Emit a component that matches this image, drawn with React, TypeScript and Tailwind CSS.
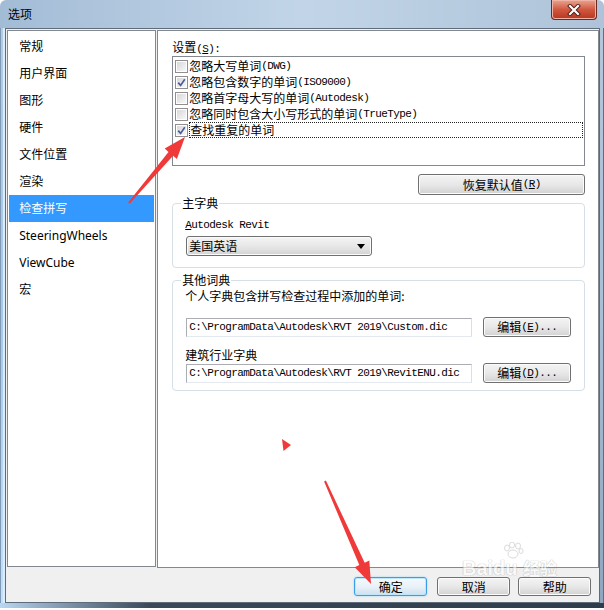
import React from "react";

const M = ({ children }: { children: React.ReactNode }) => (
  <span className="font-['Liberation_Mono',monospace] text-[11px] tracking-[-0.6px]">{children}</span>
);

function Check({ checked }: { checked: boolean }) {
  return (
    <span className="w-[13px] h-[13px] border border-[#8f8f8f] p-[1px] bg-white flex shrink-0">
      <span className="flex-1 bg-gradient-to-br from-[#d8d8d8] to-[#f8f8f8] flex items-center justify-center">
        {checked && (
          <svg width="9" height="9" viewBox="0 0 9 9">
            <path d="M1.2 4.6 L3.6 7.4 L7.8 1.2" stroke="#4b5f9e" strokeWidth="1.7" fill="none" />
          </svg>
        )}
      </span>
    </span>
  );
}

function WinButton({
  children,
  className = "",
  primary = false,
}: {
  children: React.ReactNode;
  className?: string;
  primary?: boolean;
}) {
  return (
    <div
      className={
        "flex items-center justify-center rounded-[3px] border text-[12px] text-black " +
        (primary
          ? "border-[#3c9ee0] bg-gradient-to-b from-[#f4f9fd] via-[#e9f2f8] to-[#cfe0ee] shadow-[inset_0_0_0_1px_#bfe6fb,0_0_2px_#8fd0f5] "
          : "border-[#707070] bg-gradient-to-b from-[#f4f4f4] via-[#e8e8e8] to-[#d2d2d2] shadow-[inset_0_0_0_1px_#fbfbfb] ") +
        className
      }
    >
      {children}
    </div>
  );
}

const navItems = ["常规", "用户界面", "图形", "硬件", "文件位置", "渲染", "检查拼写", "SteeringWheels", "ViewCube", "宏"];

export default function App() {
  const listItems: { zh: string; en: string; checked: boolean }[] = [
    { zh: "忽略大写单词", en: "(DWG)", checked: false },
    { zh: "忽略包含数字的单词", en: "(ISO9000)", checked: true },
    { zh: "忽略首字母大写的单词", en: "(Autodesk)", checked: false },
    { zh: "忽略同时包含大小写形式的单词", en: "(TrueType)", checked: false },
    { zh: "查找重复的单词", en: "", checked: true },
  ];

  return (
    <div className="relative w-[604px] h-[610px] bg-white overflow-hidden font-['Noto_Sans_CJK_SC',sans-serif] text-[12px] text-black">
      <div className="flex flex-col h-[608px] rounded-t-[6px] overflow-hidden">
        {/* Title bar */}
        <div className="h-[28px] flex items-start justify-between bg-gradient-to-r from-[#a3bcd6] via-[#c2d5e8] to-[#aec3d9]">
          <div className="h-[28px] flex items-center pl-[8px] text-[12px] leading-none">选项</div>
          <div className="mr-[7px] w-[46px] h-[20px] rounded-b-[4px] border border-t-0 border-[#6a2b22] bg-gradient-to-b from-[#e9a491] via-[#d0583f] to-[#b8341f] shadow-[inset_0_0_0_1px_#f0b4a6] flex items-center justify-center">
            <svg width="14" height="12" viewBox="0 0 14 12">
              <path d="M3 2 L11 10 M11 2 L3 10" stroke="#4a1c14" strokeWidth="4" strokeLinecap="square" />
              <path d="M3 2 L11 10 M11 2 L3 10" stroke="#ffffff" strokeWidth="2.2" strokeLinecap="square" />
            </svg>
          </div>
        </div>

        {/* Middle */}
        <div className="flex flex-1 min-h-0">
          <div className="w-[7px] bg-gradient-to-b from-[#b4cbe2] via-[#a6c8ea] to-[#c5e0f7] border-l border-[#7f9ab6] shadow-[inset_-2px_0_0_#d8ecfb]" />
          <div className="flex-1 flex flex-col border border-[#5e6b79] bg-[#f0f0f0]">
            <div className="flex pl-[1px] pt-[1px] gap-[1px]">
              {/* Left nav */}
              <div className="w-[149px] h-[537px] border border-[#828790] bg-white pt-[2px] px-[1px] font-['Noto_Sans','Noto_Sans_CJK_SC',sans-serif]">
                {navItems.map((n) => (
                  <div
                    key={n}
                    className={
                      "h-[27px] flex items-center pl-[10px] text-[12px] " +
                      (n === "检查拼写" ? "bg-[#3399ff] text-white" : "text-black")
                    }
                  >
                    {n}
                  </div>
                ))}
              </div>

              {/* Right panel */}
              <div className="flex-1 h-[538px] border border-[#828790] bg-white pl-[14px] pr-[13px] pt-[8px] flex flex-col">
                <div className="h-[15px] leading-[15px]">
                  设置<M>(<span className="underline">S</span>):</M>
                </div>
                <div className="mt-[2px] h-[110px] border border-[#828790] pt-[1px] pl-[2px] pr-[1px]">
                  {listItems.map((it, i) => (
                    <div key={i} className="h-[16px] flex items-center">
                      <Check checked={it.checked} />
                      <div
                        className={
                          "ml-[1px] h-[16px] flex items-center leading-none whitespace-nowrap " +
                          (i === 4 ? "flex-1 border border-dotted border-[#222]" : "")
                        }
                      >
                        {it.zh}
                        {it.en && <M>{it.en}</M>}
                      </div>
                    </div>
                  ))}
                </div>

                <WinButton className="self-end mt-[8px] w-[167px] h-[21px]">
                  恢复默认值<M>(<span className="underline">R</span>)</M>
                </WinButton>

                <fieldset className="border border-[#d5dfe5] rounded-[4px] px-0 pb-[11px]">
                  <legend className="ml-[8px] px-[1px] leading-[16px] text-[12px]">主字典</legend>
                  <div className="pl-[12px] pt-[5px]">
                    <div className="h-[14px] leading-[14px]">
                      <M>
                        <span className="underline">A</span>utodesk Revit
                      </M>
                    </div>
                    <div className="mt-[6px] ml-[1px] w-[186px] h-[20px] rounded-[3px] border border-[#707070] bg-gradient-to-b from-[#f4f4f4] via-[#e8e8e8] to-[#d3d3d3] shadow-[inset_0_0_0_1px_#fbfbfb] flex items-center justify-between pl-[2px] pr-[6px]">
                      <span>美国英语</span>
                      <svg width="8" height="5" viewBox="0 0 8 5">
                        <path d="M0 0 H8 L4 5 Z" fill="#000" />
                      </svg>
                    </div>
                  </div>
                </fieldset>

                <fieldset className="mt-[6px] border border-[#d5dfe5] rounded-[4px] px-0 pb-[7px]">
                  <legend className="ml-[8px] px-[1px] leading-[12px] text-[12px]">其他词典</legend>
                  <div className="pl-[12px] pr-[13px]">
                    <div className="mt-[3px] h-[14px] leading-[14px]">个人字典包含拼写检查过程中添加的单词:</div>
                    <div className="mt-[14px] flex items-center gap-[11px]">
                      <div className="ml-[1px] w-[286px] h-[19px] border border-[#abadb3] border-r-[#dbdfe6] border-b-[#e3e9ef] bg-white flex items-center pl-[2px] leading-none">
                        <M>C:\ProgramData\Autodesk\RVT 2019\Custom.dic</M>
                      </div>
                      <WinButton className="w-[88px] h-[20px]">
                        编辑<M>(<span className="underline">E</span>)...</M>
                      </WinButton>
                    </div>
                    <div className="mt-[11px] h-[14px] leading-[14px]">建筑行业字典</div>
                    <div className="mt-[1px] flex items-center gap-[11px]">
                      <div className="ml-[1px] w-[286px] h-[19px] border border-[#abadb3] border-r-[#dbdfe6] border-b-[#e3e9ef] bg-white flex items-center pl-[2px] leading-none">
                        <M>C:\ProgramData\Autodesk\RVT 2019\RevitENU.dic</M>
                      </div>
                      <WinButton className="w-[88px] h-[20px]">
                        编辑<M>(<span className="underline">D</span>)...</M>
                      </WinButton>
                    </div>
                  </div>
                </fieldset>
              </div>
            </div>

            {/* Bottom buttons */}
            <div className="flex justify-end mt-[9px] pr-[8px]">
              <WinButton primary className="w-[73px] h-[19px] mr-[10px]">确定</WinButton>
              <WinButton className="w-[73px] h-[19px] mr-[8px]">取消</WinButton>
              <WinButton className="w-[73px] h-[19px]">帮助</WinButton>
            </div>
          </div>
          <div className="w-[5px] bg-gradient-to-b from-[#b3c7db] via-[#a9bfd6] to-[#8ea6bf] border-r border-[#5d6f82]" />
        </div>
        <div className="h-[5px] bg-gradient-to-r from-[#b9d6f2] via-[#3a4859] via-[25%] to-[#2f3c4b]" />
      </div>

      {/* Watermark */}
      <div className="absolute left-[462px] top-[542px] w-[112px] pointer-events-none select-none opacity-60">
        <svg className="absolute left-[40px] top-[0px]" width="22" height="18" viewBox="0 0 22 18">
          <g fill="#ffffff" stroke="#c4c4c4" strokeWidth="1">
            <ellipse cx="5" cy="6" rx="2.5" ry="3" />
            <ellipse cx="10" cy="3" rx="2.5" ry="3" />
            <ellipse cx="16" cy="4" rx="2.5" ry="3" />
            <ellipse cx="19" cy="9" rx="2" ry="2.5" />
            <ellipse cx="11" cy="12" rx="5" ry="4" />
          </g>
        </svg>
        <div className="mt-[16px] text-[20px] font-bold leading-none font-['Liberation_Sans',sans-serif] text-white [text-shadow:0_0_1px_#9a9a9a,0_0_1px_#9a9a9a] whitespace-nowrap">
          Baidu <span className="font-['Noto_Sans_CJK_SC',sans-serif] text-[17px]">经验</span>
        </div>
      </div>

      {/* Red annotation arrows */}
      <svg className="absolute inset-0 pointer-events-none" width="604" height="610" viewBox="0 0 604 610">
        <polygon
          points="128.2,202.4 168.5,151.9 164.7,148.6 185,137 176.9,159 173.1,155.7 129.8,203.6"
          fill="#f03a3a"
        />
        <polygon
          points="324.1,481.4 359.3,565.1 354.7,567.2 371,584 369.3,560.6 364.7,562.7 325.9,480.6"
          fill="#f03a3a"
        />
        <polygon points="282,439 291,445 283.5,451" fill="#f03a3a" />
      </svg>
    </div>
  );
}
